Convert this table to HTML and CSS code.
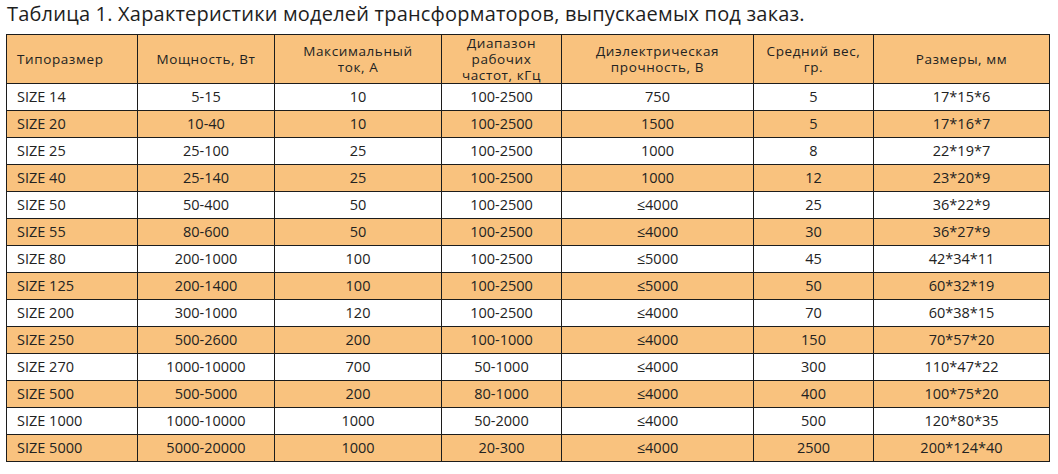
FILE: index.html
```html
<!DOCTYPE html>
<html lang="ru">
<head>
<meta charset="utf-8">
<title>Таблица 1</title>
<link rel="stylesheet" href="styles.css">
</head>
<body>
<div class="page">
  <h1 class="title">Таблица 1. Характеристики моделей трансформаторов, выпускаемых под заказ.</h1>
  <table class="spec">
    <colgroup>
      <col class="c1"><col class="c2"><col class="c3"><col class="c4"><col class="c5"><col class="c6"><col class="c7">
    </colgroup>
    <thead>
      <tr>
        <th class="left">Типоразмер</th>
        <th>Мощность, Вт</th>
        <th>Максимальный<br>ток, А</th>
        <th>Диапазон<br>рабочих<br>частот, кГц</th>
        <th>Диэлектрическая<br>прочность, В</th>
        <th>Средний вес,<br>гр.</th>
        <th>Размеры, мм</th>
      </tr>
    </thead>
    <tbody>
      <tr><td class="left">SIZE 14</td><td>5-15</td><td>10</td><td>100-2500</td><td>750</td><td>5</td><td>17*15*6</td></tr>
      <tr class="alt"><td class="left">SIZE 20</td><td>10-40</td><td>10</td><td>100-2500</td><td>1500</td><td>5</td><td>17*16*7</td></tr>
      <tr><td class="left">SIZE 25</td><td>25-100</td><td>25</td><td>100-2500</td><td>1000</td><td>8</td><td>22*19*7</td></tr>
      <tr class="alt"><td class="left">SIZE 40</td><td>25-140</td><td>25</td><td>100-2500</td><td>1000</td><td>12</td><td>23*20*9</td></tr>
      <tr><td class="left">SIZE 50</td><td>50-400</td><td>50</td><td>100-2500</td><td>≤4000</td><td>25</td><td>36*22*9</td></tr>
      <tr class="alt"><td class="left">SIZE 55</td><td>80-600</td><td>50</td><td>100-2500</td><td>≤4000</td><td>30</td><td>36*27*9</td></tr>
      <tr><td class="left">SIZE 80</td><td>200-1000</td><td>100</td><td>100-2500</td><td>≤5000</td><td>45</td><td>42*34*11</td></tr>
      <tr class="alt"><td class="left">SIZE 125</td><td>200-1400</td><td>100</td><td>100-2500</td><td>≤5000</td><td>50</td><td>60*32*19</td></tr>
      <tr><td class="left">SIZE 200</td><td>300-1000</td><td>120</td><td>100-2500</td><td>≤4000</td><td>70</td><td>60*38*15</td></tr>
      <tr class="alt"><td class="left">SIZE 250</td><td>500-2600</td><td>200</td><td>100-1000</td><td>≤4000</td><td>150</td><td>70*57*20</td></tr>
      <tr><td class="left">SIZE 270</td><td>1000-10000</td><td>700</td><td>50-1000</td><td>≤4000</td><td>300</td><td>110*47*22</td></tr>
      <tr class="alt"><td class="left">SIZE 500</td><td>500-5000</td><td>200</td><td>80-1000</td><td>≤4000</td><td>400</td><td>100*75*20</td></tr>
      <tr><td class="left">SIZE 1000</td><td>1000-10000</td><td>1000</td><td>50-2000</td><td>≤4000</td><td>500</td><td>120*80*35</td></tr>
      <tr class="alt"><td class="left">SIZE 5000</td><td>5000-20000</td><td>1000</td><td>20-300</td><td>≤4000</td><td>2500</td><td>200*124*40</td></tr>
    </tbody>
  </table>
</div>
</body>
</html>
```
FILE: styles.css
```css
html, body {
  margin: 0;
  padding: 0;
  background: #ffffff;
}
.page {
  padding: 2px 0 0 6px;
  font-family: "Open Sans", "DejaVu Sans", sans-serif;
  color: #222222;
}
.title {
  margin: 0 0 8px 1px;
  font-size: 20px;
  line-height: 24px;
  font-weight: normal;
  letter-spacing: 0.2px;
  color: #1e1e1e;
}
.spec {
  border-collapse: collapse;
  table-layout: fixed;
  width: 1043px;
}
.c1 { width: 131px; }
.c2 { width: 137px; }
.c3 { width: 167px; }
.c4 { width: 120px; }
.c5 { width: 192px; }
.c6 { width: 120px; }
.c7 { width: 176px; }
.spec th, .spec td {
  border: 1px solid #1c1c1c;
  text-align: center;
  padding: 0 4px;
}
.spec th {
  height: 48px;
  padding: 0 4px;
  background: #f9c27e;
  font-weight: normal;
  font-size: 13.5px;
  line-height: 16px;
  letter-spacing: 0.6px;
}
.spec td {
  height: 26px;
  padding: 0 4px;
  font-size: 14.5px;
  line-height: 18px;
}
.spec .left {
  text-align: left;
  padding-left: 10px;
}
.spec tr.alt td {
  background: #f9c27e;
}
```
